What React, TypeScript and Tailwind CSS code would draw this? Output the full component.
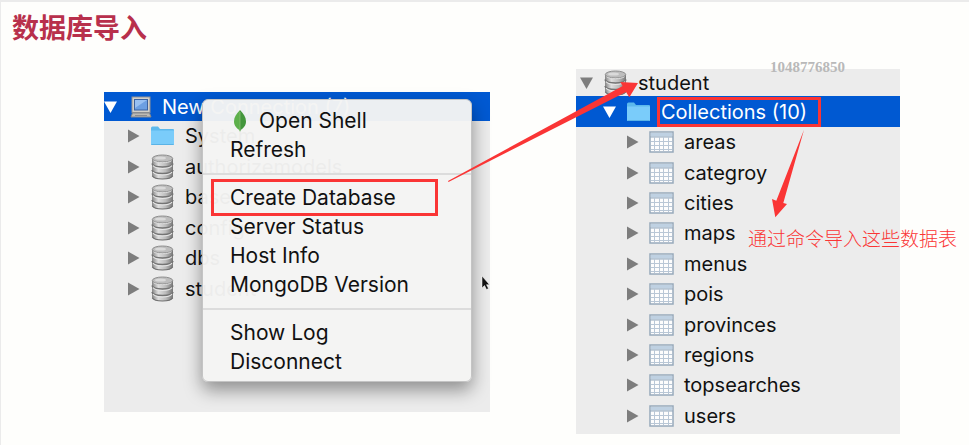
import React from 'react';
import clsx from 'clsx';

type IconName = 'computer' | 'folder' | 'database' | 'table';

type TreeRowProps = {
  label: string;
  icon: IconName;
  open?: boolean;
  selected?: boolean;
  marked?: boolean;
  className?: string;
};

const systemItems: { label: string; icon: IconName }[] = [
  { label: 'System', icon: 'folder' },
  { label: 'authorizemodels', icon: 'database' },
  { label: 'base', icon: 'database' },
  { label: 'config', icon: 'database' },
  { label: 'dbs', icon: 'database' },
  { label: 'student', icon: 'database' },
];

const collections = [
  'areas',
  'categroy',
  'cities',
  'maps',
  'menus',
  'pois',
  'provinces',
  'regions',
  'topsearches',
  'users',
];

const menuGroups = [
  ['Open Shell', 'Refresh'],
  ['Create Database', 'Server Status', 'Host Info', 'MongoDB Version'],
  ['Show Log', 'Disconnect'],
];

const DatabaseIcon = () => (
  <svg width="25" height="26" viewBox="0 0 25 26" aria-hidden="true">
    <path d="M2 4.500v17c0 2 4.700 3.500 10.500 3.500S23 23.500 23 21.500v-17z" fill="url(#metal)" />
    <path d="M2 9.500c.5 2.200 5 3.500 10.500 3.500S22.500 11.700 23 9.500M2 16c.5 2.200 5 3.500 10.500 3.500S22.500 18.200 23 16" fill="none" stroke="#747474" strokeWidth="1.600" />
    <path d="M3 11.700c1.500 1.800 5 2.800 9.500 2.800s8-1 9.500-2.800M3 18.200c1.500 1.800 5 2.800 9.500 2.800s8-1 9.500-2.800" fill="none" stroke="#e6e6e6" strokeWidth="1.200" />
    <path d="M2.300 21.800c1 1.900 5 3.200 10.200 3.200s9.200-1.300 10.200-3.200" fill="none" stroke="#707070" strokeWidth="1.200" />
    <ellipse cx="12.500" cy="4.500" rx="10.200" ry="3.500" fill="#bdbdbd" stroke="#8f8f8f" />
    <path d="M3.500 6.800c2 1.300 5 1.900 9 1.900s7-.6 9-1.900" fill="none" stroke="#dcdcdc" />
    <ellipse cx="10.500" cy="4" rx="5.500" ry="1.600" fill="#dadada" />
  </svg>
);

const FolderIcon = () => (
  <svg width="25" height="20" viewBox="0 0 25 20" aria-hidden="true">
    <path d="M1 2q0-1.500 1.500-1.500H8L10 3h13q1 0 1 1v14q0 1-1 1H2q-1 0-1-1z" fill="#5cb9ec" />
    <path d="M1 4.500h23V18q0 1-1 1H2q-1 0-1-1z" fill="#7accfa" />
    <path d="M1.500 18.500h22" stroke="#5ab3e6" />
  </svg>
);

const ComputerIcon = () => (
  <svg width="25" height="22" viewBox="0 0 25 22" aria-hidden="true">
    <rect x="5" y="1" width="18" height="15.500" fill="#d2d0ca" stroke="#8f9196" />
    <rect x="7.500" y="3.500" width="13" height="10.500" fill="#6c9fe2" stroke="#3c62a0" />
    <path d="M8 4h12L8 12z" fill="#98c0f2" />
    <path d="M5.500 17h17l1.500 4H4z" fill="#bdbab4" stroke="#85878b" />
    <path d="M8 19.500h12" stroke="#8c8d90" />
  </svg>
);

const TableIcon = () => (
  <svg width="25" height="22" viewBox="0 0 25 22" aria-hidden="true">
    <rect x="1" y="1" width="23" height="20" fill="#fdfdfd" stroke="#97a9bb" strokeWidth="1.500" />
    <rect x="2" y="2" width="21" height="3.500" fill="#bfd1e2" />
    <path d="M1 6h23" stroke="#93a7bb" />
    <path d="M2 10.500h21M2 14.500h21M2 18.500h21M5.500 6v14M10.500 6v14M14.500 6v14M19.500 6v14" stroke="#b9c7d6" fill="none" />
  </svg>
);

const icons: Record<IconName, React.FC> = {
  computer: ComputerIcon,
  folder: FolderIcon,
  database: DatabaseIcon,
  table: TableIcon,
};

const TreeRow: React.FC<TreeRowProps> = ({ label, icon, open, selected, marked, className }) => {
  const Icon = icons[icon];
  return (
    <button
      type="button"
      aria-expanded={!!open}
      className={clsx(
        'flex w-full items-center gap-[10px] text-left text-xl leading-7 whitespace-nowrap',
        selected ? 'bg-[#0059d2] text-white' : 'text-[#111]',
        className,
      )}
    >
      <svg
        width="13"
        height="14"
        viewBox="0 0 13 14"
        aria-hidden="true"
        className={clsx('shrink-0', selected ? 'fill-white' : 'fill-[#7d7d7d]')}
      >
        <path d={open ? 'M0 1.500h13L6.500 13z' : 'M1 .5 12.500 7 1 13.500z'} />
      </svg>
      <span className="flex w-[25px] shrink-0 justify-center">
        <Icon />
      </span>
      <span className="relative">
        {label}
        {marked && <span className="absolute -top-px -right-3.5 -bottom-px -left-1 border-3 border-[#fa3535]" />}
      </span>
    </button>
  );
};

const LeafIcon = () => (
  <svg width="14" height="24" viewBox="0 0 14 24" aria-hidden="true">
    <path d="M7 1C3.500 4.500 1 8 1 12.500c0 4 2.500 6.500 5.300 8.500L7 23z" fill="#5db04b" />
    <path d="M7 1c3.500 3.500 6 7 6 11.500 0 4-2.500 6.500-5.300 8.500L7 23z" fill="#43963c" />
    <path d="M7 3v19" stroke="#8fc07c" strokeWidth=".7" />
  </svg>
);

const ContextMenu = () => (
  <div
    role="menu"
    className="absolute top-[7px] left-[98px] w-[270px] rounded-md border border-[#c4c4c4] bg-[#f4f4f3]/97 pt-[6px] pb-[5px] shadow-[0_8px_18px_rgba(0,0,0,0.4)]"
  >
    {menuGroups.map((group, index) => (
      <div key={group[0]} className={clsx(index > 0 && 'mt-[9px] border-t-2 border-[#dcdcdc] pt-2')}>
        {group.map(item => (
          <button
            key={item}
            type="button"
            role="menuitem"
            className="relative flex h-[29px] w-full items-center gap-3 pl-[27px] text-left text-[#111]"
          >
            {item === 'Open Shell' && (
              <span className="pl-[3px]">
                <LeafIcon />
              </span>
            )}
            {item}
            {item === 'Create Database' && (
              <span className="absolute -inset-y-1 right-[33px] left-2 border-3 border-[#fa3535]" />
            )}
          </button>
        ))}
      </div>
    ))}
  </div>
);

export default function App() {
  return (
    <main className="relative min-h-screen border-t-2 border-l border-[#ebebeb] bg-[#fefefc] font-['Inter','Noto_Sans_CJK_SC',sans-serif] text-[21px] leading-7">
      <svg width="0" height="0" className="absolute" aria-hidden="true">
        <defs>
          <linearGradient id="metal">
            <stop offset="0" stopColor="#858585" />
            <stop offset=".3" stopColor="#dedede" />
            <stop offset=".65" stopColor="#bcbcbc" />
            <stop offset="1" stopColor="#757575" />
          </linearGradient>
        </defs>
      </svg>

      <h1 className="h-[67px] pt-[5px] pl-[11px] font-['Noto_Sans_CJK_SC',sans-serif] text-[27px] leading-10 font-bold text-[#b8304c]">
        数据库导入
      </h1>

      <div className="grid grid-cols-[386fr_324fr] items-start gap-[86px] pr-[69px] pl-[103px]">
        <section className="relative mt-[23px] bg-[#ececec] pb-[108px]">
          <TreeRow label="New Connection (7)" icon="computer" open selected className="h-[29px]" />
          <div className="grid h-[183px] auto-rows-fr">
            {systemItems.map(item => (
              <TreeRow key={item.label} {...item} className="pl-[23px]" />
            ))}
          </div>
          <ContextMenu />
        </section>

        <section className="relative bg-[#ececec] pb-[3px]">
          <TreeRow label="student" icon="database" open className="h-[27px] pl-1" />
          <TreeRow label="Collections (10)" icon="folder" open selected marked className="h-[31px] pl-[27px]" />
          <div className="grid h-[304px] auto-rows-fr">
            {collections.map(name => (
              <TreeRow key={name} label={name} icon="table" className="pl-[50px]" />
            ))}
          </div>
          <span className="absolute -top-3 left-[194px] font-['Liberation_Serif',serif] text-[15px] leading-5 font-bold text-[#b9b9b9]">
            1048776850
          </span>
          <p className="absolute top-[155px] left-[172px] font-['Noto_Sans_CJK_SC',sans-serif] text-[19px] font-light whitespace-nowrap text-[#fa3535]">
            通过命令导入这些数据表
          </p>
        </section>
      </div>

      {/* Setas e cursor por cima dos painéis */}
      <svg
        width="969"
        height="445"
        viewBox="0 0 969 445"
        aria-hidden="true"
        className="pointer-events-none absolute -top-[2px] -left-px"
      >
        <path d="M448 181 622.700 86 620.300 82 638 83 629.300 97.300 626 92 448.500 182z" fill="#fa3535" />
        <path d="M804 129.700 776.300 200.700 772 199 775.300 217.300 787 204 783.300 203z" fill="#fa3535" />
        <path d="M482 276v12l2.500-2.500 2 4 2-1-2-3.800h3z" fill="#111" stroke="#fff" strokeWidth=".5" />
      </svg>
    </main>
  );
}
